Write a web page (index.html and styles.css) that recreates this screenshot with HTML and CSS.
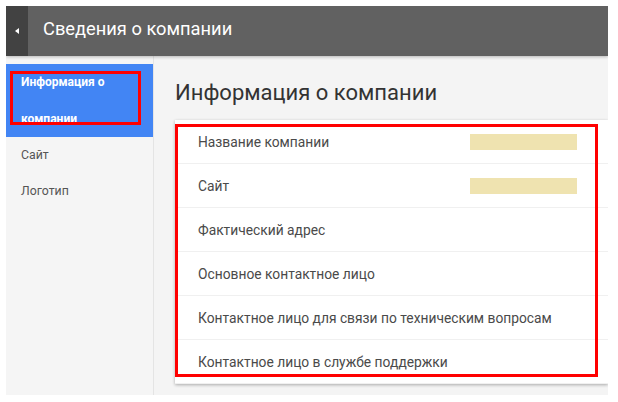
FILE: index.html
```html
<!DOCTYPE html>
<html lang="ru">
<head>
  <meta charset="UTF-8">
  <title>Сведения о компании</title>
  <link rel="stylesheet" href="styles.css">
</head>
<body>
  <div class="app">
    <div class="topbar">
      <div class="back-btn"><span class="arrow"></span></div>
      <div class="topbar-title">Сведения о компании</div>
    </div>

    <div class="layout">
      <div class="sidebar">
        <div class="nav-item active">
          Информация о<br>компании
          <div class="mark mark-nav"></div>
        </div>
        <div class="nav-item">Сайт</div>
        <div class="nav-item">Логотип</div>
      </div>

      <div class="main">
        <div class="page-title">Информация о компании</div>
        <div class="card">
          <div class="row">
            <span>Название компании</span>
            <span class="filled"></span>
          </div>
          <div class="row">
            <span>Сайт</span>
            <span class="filled"></span>
          </div>
          <div class="row"><span>Фактический адрес</span></div>
          <div class="row"><span>Основное контактное лицо</span></div>
          <div class="row"><span>Контактное лицо для связи по техническим вопросам</span></div>
          <div class="row"><span>Контактное лицо в службе поддержки</span></div>
          <div class="mark mark-card"></div>
        </div>
      </div>
    </div>
  </div>
</body>
</html>
```

FILE: styles.css
```css
body {
  margin: 0;
  background-color: #fff;
  font-family: Roboto, "Liberation Sans", sans-serif;
}

.app {
  margin: 6px 0 0 6px;
  width: 602px;
  height: 389px;
  display: flex;
  flex-direction: column;
  overflow: hidden;
}

.topbar {
  height: 50px;
  display: flex;
  background-color: #616161;
  box-shadow: 0 1px 3px rgba(0, 0, 0, 0.25);
  position: relative;
  z-index: 1;
}

.back-btn {
  width: 22px;
  background-color: #424242;
  display: flex;
  align-items: center;
  justify-content: center;
}

.arrow {
  width: 0;
  height: 0;
  border-top: 3px solid transparent;
  border-bottom: 3px solid transparent;
  border-right: 4px solid #fff;
}

.topbar-title {
  padding-left: 15px;
  line-height: 46px;
  font-size: 18.3px;
  color: #fff;
}

.layout {
  flex: 1;
  display: flex;
}

.sidebar {
  width: 147px;
  padding-top: 8px;
  background-color: #f5f5f5;
  border-right: 1px solid #e4e4e4;
}

.nav-item {
  padding-left: 15px;
  line-height: 36px;
  font-size: 12.3px;
  color: #555;
}

.nav-item.active {
  position: relative;
  height: 73px;
  line-height: 37px;
  background-color: #4285f4;
  color: #fff;
  font-size: 12px;
  font-weight: bold;
}

.main {
  flex: 1;
  padding: 22px 0 0 21px;
  background-color: #f4f4f4;
}

.page-title {
  line-height: 30px;
  margin-bottom: 12px;
  font-size: 22px;
  color: #333;
}

.card {
  position: relative;
  background-color: #fff;
  box-shadow: 0 1px 3px rgba(0, 0, 0, 0.3);
}

.row {
  height: 44px;
  box-sizing: border-box;
  display: flex;
  align-items: center;
  justify-content: space-between;
  padding: 1px 31px 0 23px;
  border-bottom: 1px solid #f0f0f0;
  font-size: 13.8px;
  color: #4a4a4a;
}

.row:last-of-type {
  border-bottom: none;
}

.filled {
  width: 107px;
  height: 16px;
  background-color: #efe3b0;
}

/* red annotation frames */
.mark {
  position: absolute;
  border: 3px solid #f00;
  box-sizing: border-box;
}

.mark-nav {
  left: 4px;
  top: 7px;
  width: 131px;
  height: 54px;
}

.mark-card {
  left: 0;
  top: 4px;
  width: 423px;
  height: 253px;
}
```
